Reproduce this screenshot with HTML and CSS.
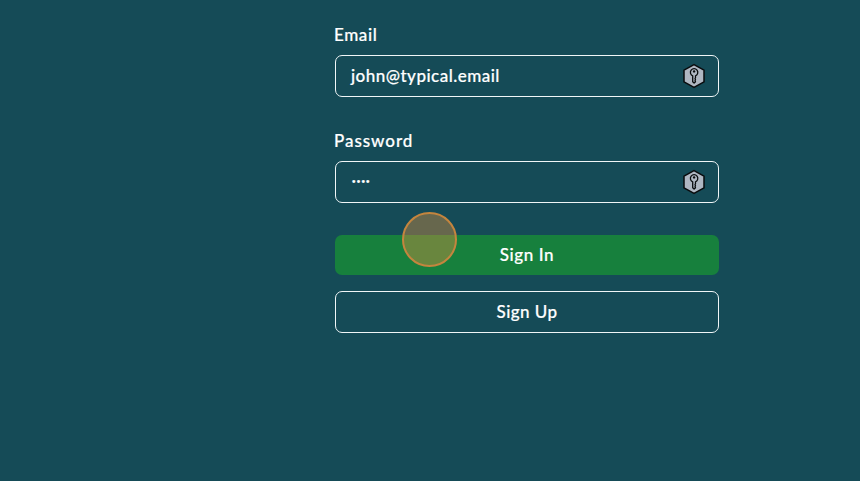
FILE: index.html
```
<!DOCTYPE html>
<html lang="en">
<head>
<meta charset="utf-8">
<title>Sign In</title>
<link rel="stylesheet" href="styles.css">
</head>
<body>
<svg class="defs" width="0" height="0" aria-hidden="true">
  <symbol id="key" viewBox="0 0 24 26">
    <path d="M12 1.6 22 7.1V18.9L12 24.4 2 18.9V7.1Z" fill="#afb7c2" stroke="#080b0d" stroke-width="1.5" stroke-linejoin="round"/>
    <path d="M10.7 12.8V18.8l1.4 1.3 1.4-1.3-.5-1 .5-1-.5-1 .5-1v-2a3.7 3.7 0 1 0-2.8 0Z" fill="#afb7c2" stroke="#080b0d" stroke-width="1.3" stroke-linejoin="round"/>
    <circle cx="12.1" cy="8.4" r="1.2" fill="#080b0d"/>
  </symbol>
</svg>
<main class="form">
  <div class="label"><span class="email-label">Email</span></div>
  <div class="field"><span class="email-value">john@typical.email</span><svg class="key"><use href="#key"/></svg></div>
  <div class="label"><span class="password-label">Password</span></div>
  <div class="field"><span class="dots">••••</span><svg class="key"><use href="#key"/></svg></div>
  <button class="button primary">Sign In<span class="pointer"></span></button>
  <button class="button outline">Sign Up</button>
</main>
</body>
</html>
```

FILE: styles.css
```
* { box-sizing: border-box; }
body {
  margin: 0;
  height: 481px;
  overflow: hidden;
  background: #154b57;
  color: #fff;
  font: 500 17px/24px Lato, "Noto Sans", sans-serif;
  -webkit-text-stroke: .2px #fff;
}
.defs { position: absolute; }
.form {
  display: flex;
  flex-direction: column;
  width: 384px;
  margin-left: 335px;
  padding-top: 23px;
}
.label { height: 24px; margin: 0 0 8px -1px; }
.field {
  display: flex;
  align-items: center;
  justify-content: space-between;
  height: 42px;
  margin-bottom: 32px;
  padding: 0 12px 0 15px;
  border: 1px solid #f0f6f7;
  border-radius: 7px;
}
.email-label { letter-spacing: .6px; }
.password-label { letter-spacing: .95px; }
.email-value { letter-spacing: .48px; }
.dots { padding-left: 1px; font: 10px/20px "Liberation Sans", sans-serif; letter-spacing: 1.2px; }
.key { width: 24px; height: 26px; }
.button {
  position: relative;
  height: 40px;
  padding: 0;
  border: 0;
  border-radius: 7px;
  background: #17803d;
  color: #fff;
  font: inherit;
  letter-spacing: .6px;
}
.outline {
  height: 42px;
  margin-top: 16px;
  border: 1px solid #f0f6f7;
  background: transparent;
  letter-spacing: .45px;
}
.pointer {
  position: absolute;
  left: 67px;
  top: -23px;
  width: 55px;
  height: 55px;
  border: 2px solid #c4853e;
  border-radius: 50%;
  background: rgba(213, 142, 64, .43);
}
```
